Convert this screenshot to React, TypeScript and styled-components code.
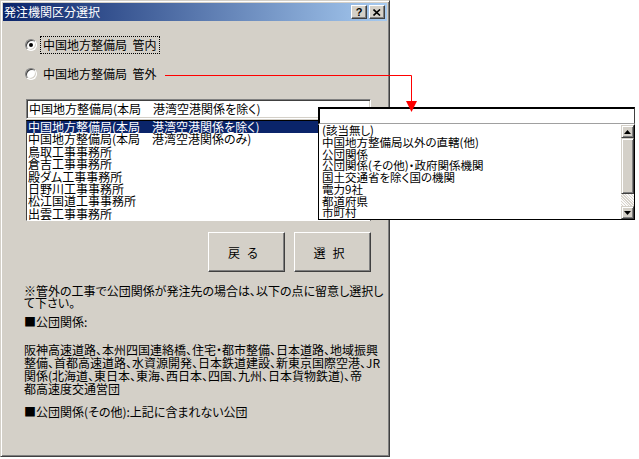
import React from "react";
import styled, { createGlobalStyle, css } from "styled-components";

const FONT = `"Noto Sans CJK JP", "Noto Sans CJK SC", sans-serif`;

const GlobalStyle = createGlobalStyle`
  html, body { margin: 0; padding: 0; background: #fff; }
  body { font-family: ${FONT}; font-size: 12px; color: #000; }
`;

const Stage = styled.div`
  position: relative;
  width: 639px;
  height: 459px;
  overflow: hidden;
  background: #fff;
  font-family: ${FONT};
  font-feature-settings: "palt";
  color: #000;
`;

const Dialog = styled.div`
  box-sizing: border-box;
  width: 390px;
  height: 457px;
  background: #d4d0c8;
  border: 1px solid;
  border-color: #d4d0c8 #404040 #404040 #d4d0c8;
  box-shadow: inset 1px 1px 0 #fff, inset -1px -1px 0 #808080;
  padding: 2px;
  display: flex;
  flex-direction: column;
`;

const TitleBar = styled.div`
  height: 18px;
  display: flex;
  align-items: center;
  background: linear-gradient(to right, #0a246a, #a6caf0);
  padding: 0 2px 0 1px;
`;

const Title = styled.span`
  flex: 1;
  color: #fff;
  font-size: 12px;
  line-height: 18px;
  white-space: nowrap;
`;

const CaptionButtons = styled.div`
  display: flex;
  gap: 2px;
`;

const CaptionButton = styled.div`
  box-sizing: border-box;
  width: 16px;
  height: 14px;
  background: #d4d0c8;
  border: 1px solid;
  border-color: #fff #404040 #404040 #fff;
  box-shadow: inset -1px -1px 0 #808080;
  display: flex;
  align-items: center;
  justify-content: center;
  font: bold 11px "Liberation Sans", sans-serif;
  line-height: 1;
`;

const Body = styled.div`
  display: flex;
  flex-direction: column;
  padding: 15px 4px 0 21px;
`;

const RadioRow = styled.div<{ $gap?: number }>`
  display: flex;
  align-items: center;
  height: 18px;
  margin-top: ${(p) => p.$gap ?? 0}px;
  margin-left: 1px;
  gap: 3px;
`;

const RadioCircle = styled.span`
  box-sizing: border-box;
  width: 12px;
  height: 12px;
  border-radius: 50%;
  background: #fff;
  border: 1px solid;
  border-color: #808080 #fff #fff #808080;
  box-shadow: inset 1px 1px 0 #404040, inset -1px -1px 0 #d4d0c8;
  display: flex;
  align-items: center;
  justify-content: center;
`;

const RadioDot = styled.span`
  width: 4px;
  height: 4px;
  border-radius: 50%;
  background: #000;
`;

const RadioLabel = styled.span<{ $focused?: boolean }>`
  box-sizing: border-box;
  height: 18px;
  line-height: 16px;
  padding: 0 3px 0 2px;
  font-size: 12px;
  white-space: pre;
  border: 1px dotted ${(p) => (p.$focused ? "#000" : "transparent")};
`;

const ComboWrap = styled.div`
  position: relative;
  margin: 16px 12px 0 2px;
`;

const Combo = styled.div`
  box-sizing: border-box;
  height: 20px;
  background: #fff;
  border: 1px solid;
  border-color: #808080 #fff #fff #808080;
  box-shadow: inset 1px 1px 0 #404040, inset -1px -1px 0 #d4d0c8;
  padding: 0 2px;
  font-size: 12px;
  line-height: 18px;
  white-space: pre;
`;

const DropList = styled.div`
  position: absolute;
  left: 0;
  right: 0;
  top: 21px;
  box-sizing: border-box;
  height: 101px;
  background: #fff;
  border: 1px solid;
  border-color: #000 #000 #fff #404040;
  z-index: 2;
`;

const ListRow = styled.div<{ $selected?: boolean; $h: number; $size: number }>`
  height: ${(p) => p.$h}px;
  line-height: ${(p) => p.$h}px;
  font-size: ${(p) => p.$size}px;
  padding-left: 1px;
  white-space: pre;
  ${(p) =>
    p.$selected &&
    css`
      background: #0a246a;
      color: #fff;
    `}
`;

const ButtonRow = styled.div`
  display: flex;
  justify-content: flex-end;
  gap: 9px;
  margin-top: 113px;
  padding-right: 12px;
`;

const PushButton = styled.div`
  box-sizing: border-box;
  width: 77px;
  height: 40px;
  background: #d4d0c8;
  border: 1px solid;
  border-color: #fff #404040 #404040 #fff;
  box-shadow: inset -1px -1px 0 #808080, inset 1px 1px 0 #d4d0c8;
  display: flex;
  align-items: center;
  justify-content: center;
  font-size: 12px;
  letter-spacing: 7px;
`;

const Note = styled.div<{ $gap: number }>`
  margin-top: ${(p) => p.$gap}px;
  font-size: 12px;
  line-height: 12.7px;
  white-space: nowrap;
`;

const Popup = styled.div`
  position: absolute;
  left: 318px;
  top: 107px;
  width: 317px;
  display: flex;
  flex-direction: column;
  z-index: 3;
`;

const PopupInput = styled.div`
  box-sizing: border-box;
  height: 17px;
  background: #fff;
  border-top: 2px solid #000;
  border-left: 2px solid #000;
  border-right: 1px solid #404040;
  border-bottom: 1px solid #a0a0a0;
`;

const PopupList = styled.div`
  box-sizing: border-box;
  height: 96px;
  background: #fff;
  border: 1px solid;
  border-color: #fff #000 #000 #000;
  display: flex;
`;

const PopupItems = styled.div`
  flex: 1;
  padding: 0 0 0 2px;
`;

const ScrollBar = styled.div`
  width: 13px;
  display: flex;
  flex-direction: column;
  background: #ebe9e4;
`;

const ScrollButton = styled.div`
  box-sizing: border-box;
  height: 13px;
  background: #d4d0c8;
  border: 1px solid;
  border-color: #d4d0c8 #404040 #404040 #d4d0c8;
  box-shadow: inset 1px 1px 0 #fff, inset -1px -1px 0 #808080;
  display: flex;
  align-items: center;
  justify-content: center;
`;

const ScrollThumb = styled.div`
  box-sizing: border-box;
  height: 56px;
  background: #d4d0c8;
  border: 1px solid;
  border-color: #d4d0c8 #404040 #404040 #d4d0c8;
  box-shadow: inset 1px 1px 0 #fff, inset -1px -1px 0 #808080;
`;

const ScrollTrack = styled.div`
  flex: 1;
  background-color: #ece9e2;
  background-image: repeating-linear-gradient(45deg, #fff 0 1px, #d4d0c8 1px 2px);
  opacity: 0.8;
`;

const Connector = styled.svg`
  position: absolute;
  left: 0;
  top: 0;
  width: 639px;
  height: 459px;
  pointer-events: none;
  z-index: 4;
`;

const leftItems = [
  "中国地方整備局(本局　港湾空港関係を除く)",
  "中国地方整備局(本局　港湾空港関係のみ)",
  "鳥取工事事務所",
  "倉吉工事事務所",
  "殿ダム工事事務所",
  "日野川工事事務所",
  "松江国道工事事務所",
  "出雲工事事務所",
];

const rightItems = [
  "(該当無し)",
  "中国地方整備局以外の直轄(他)",
  "公団関係",
  "公団関係(その他)・政府関係機関",
  "国土交通省を除く国の機関",
  "電力9社",
  "都道府県",
  "市町村",
];

const Arrow = ({ up }: { up?: boolean }) => (
  <svg width="7" height="4" viewBox="0 0 7 4">
    {up ? <polygon points="3.5,0 7,4 0,4" fill="#000" /> : <polygon points="0,0 7,0 3.5,4" fill="#000" />}
  </svg>
);

export default function App() {
  return (
    <Stage>
      <GlobalStyle />
      <Dialog>
        <TitleBar>
          <Title>発注機関区分選択</Title>
          <CaptionButtons>
            <CaptionButton>?</CaptionButton>
            <CaptionButton>
              <svg width="8" height="7" viewBox="0 0 8 7">
                <path d="M0.5 0.5 L7 6.5 M7 0.5 L0.5 6.5" stroke="#000" strokeWidth="1.6" />
              </svg>
            </CaptionButton>
          </CaptionButtons>
        </TitleBar>
        <Body>
          <RadioRow>
            <RadioCircle>
              <RadioDot />
            </RadioCircle>
            <RadioLabel $focused>中国地方整備局  管内</RadioLabel>
          </RadioRow>
          <RadioRow $gap={11}>
            <RadioCircle />
            <RadioLabel>中国地方整備局  管外</RadioLabel>
          </RadioRow>
          <ComboWrap>
            <Combo>中国地方整備局(本局　港湾空港関係を除く)</Combo>
            <DropList>
              {leftItems.map((t, i) => (
                <ListRow key={t} $selected={i === 0} $h={12.4} $size={12}>
                  {t}
                </ListRow>
              ))}
            </DropList>
          </ComboWrap>
          <ButtonRow>
            <PushButton>戻る</PushButton>
            <PushButton>選択</PushButton>
          </ButtonRow>
          <Note $gap={12.5}>
            ※管外の工事で公団関係が発注先の場合は、以下の点に留意し選択し
            <br />
            て下さい。
          </Note>
          <Note $gap={6.5}>■公団関係:</Note>
          <Note $gap={15.3}>
            阪神高速道路、本州四国連絡橋、住宅・都市整備、日本道路、地域振興
            <br />
            整備、首都高速道路、水資源開発、日本鉄道建設、新東京国際空港、JR
            <br />
            関係(北海道、東日本、東海、西日本、四国、九州、日本貨物鉄道)、帝
            <br />
            都高速度交通営団
          </Note>
          <Note $gap={10.9}>■公団関係(その他):上記に含まれない公団</Note>
        </Body>
      </Dialog>

      <Popup>
        <PopupInput />
        <PopupList>
          <PopupItems>
            {rightItems.map((t) => (
              <ListRow key={t} $h={11.75} $size={11.5}>
                {t}
              </ListRow>
            ))}
          </PopupItems>
          <ScrollBar>
            <ScrollButton>
              <Arrow up />
            </ScrollButton>
            <ScrollThumb />
            <ScrollTrack />
            <ScrollButton>
              <Arrow />
            </ScrollButton>
          </ScrollBar>
        </PopupList>
      </Popup>

      <Connector viewBox="0 0 639 459">
        <polyline points="165,75.5 411.5,75.5 411.5,103" fill="none" stroke="#f00" strokeWidth="1" />
        <polygon points="406,101 417,101 411.5,112" fill="#f00" />
      </Connector>
    </Stage>
  );
}
